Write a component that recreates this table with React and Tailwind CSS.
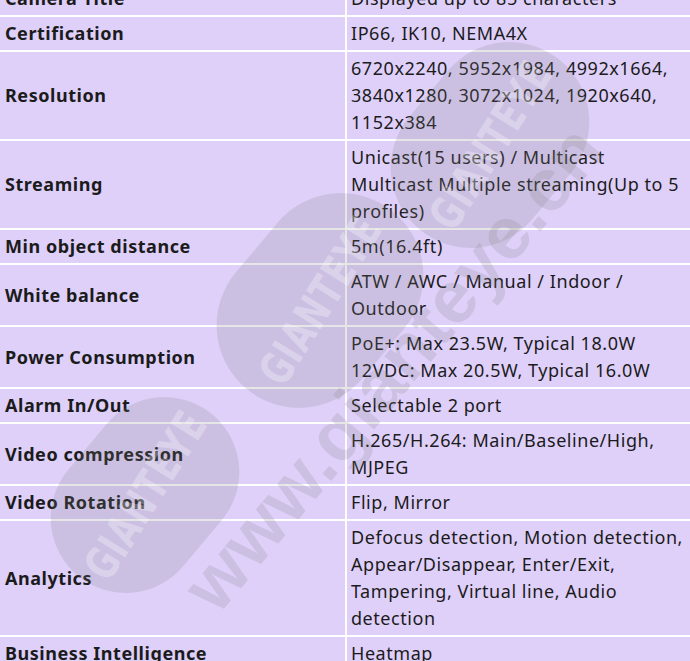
const specs = [
  ["Camera Title", "Displayed up to 85 characters"],
  ["Certification", "IP66, IK10, NEMA4X"],
  ["Resolution", "6720x2240, 5952x1984, 4992x1664, 3840x1280, 3072x1024, 1920x640, 1152x384"],
  ["Streaming", "Unicast(15 users) / Multicast Multicast Multiple streaming(Up to 5 profiles)"],
  ["Min object distance", "5m(16.4ft)"],
  ["White balance", "ATW / AWC / Manual / Indoor / Outdoor"],
  ["Power Consumption", "PoE+: Max 23.5W, Typical 18.0W 12VDC: Max 20.5W, Typical 16.0W"],
  ["Alarm In/Out", "Selectable 2 port"],
  ["Video compression", "H.265/H.264: Main/Baseline/High, MJPEG"],
  ["Video Rotation", "Flip, Mirror"],
  ["Analytics", "Defocus detection, Motion detection, Appear/Disappear, Enter/Exit, Tampering, Virtual line, Audio detection"],
  ["Business Intelligence", "Heatmap"],
];

function Blob({ className, label }) {
  return (
    <div className={`absolute flex -rotate-[50deg] items-center justify-center rounded-full bg-[rgba(128,128,128,0.2)] ${className}`}>
      <span className="-rotate-[8deg] scale-y-125 font-['Liberation_Sans_Narrow','DejaVu_Sans_Condensed',sans-serif] text-[36px] font-bold tracking-[1px] text-[rgba(255,255,255,0.3)]">
        {label}
      </span>
    </div>
  );
}

function Watermark() {
  return (
    <div className="pointer-events-none absolute inset-0 overflow-hidden">
      <Blob className="left-[380px] top-[65px] h-[160px] w-[220px]" label="GIANTEYE" />
      <Blob className="left-[205px] top-[218px] h-[165px] w-[230px]" label="GIANTEYE" />
      <Blob className="left-[40px] top-[420px] h-[150px] w-[210px]" label="GIANTEYE" />
      <div className="absolute left-[393px] top-[368px] -translate-x-1/2 -translate-y-1/2 -rotate-[50deg] whitespace-nowrap font-['Liberation_Sans',sans-serif] text-[74px] font-bold leading-none text-[rgba(128,128,128,0.2)]">
        www.gianteye.cn
      </div>
    </div>
  );
}

export default function App() {
  return (
    <div className="relative h-[661px] w-[690px] overflow-hidden bg-[#dfd0fa] font-['Noto_Sans',sans-serif] text-[18px] leading-[27px] tracking-[0.55px] text-[#1b1b1b]">
      <div className="-mt-[18px]">
        <table className="w-full table-fixed border-collapse">
          <tbody>
            {specs.map(([label, value]) => (
              <tr key={label} className="border-b-2 border-white">
                <td className="w-[346px] border-r-2 border-white px-[5px] py-[3px] align-middle font-bold">{label}</td>
                <td className="px-[4px] py-[3px] align-top">{value}</td>
              </tr>
            ))}
          </tbody>
        </table>
      </div>
      <Watermark />
    </div>
  );
}
